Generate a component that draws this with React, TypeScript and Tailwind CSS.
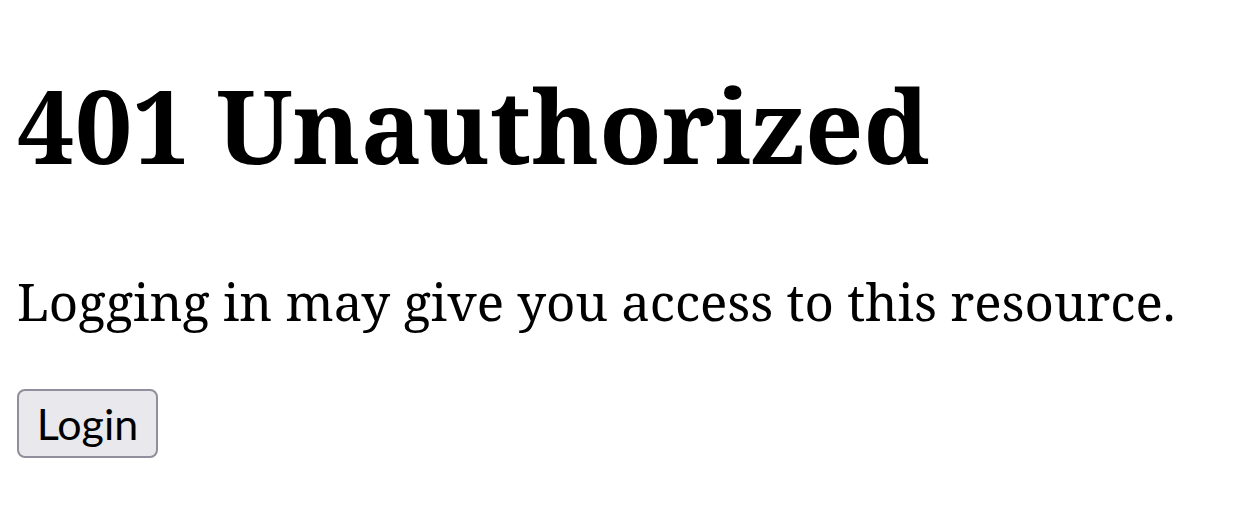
import React from 'react';

const App = () => {
  return (
    <div className="min-h-screen bg-white px-[17px] text-black">
      <h1 className="pt-[60px] text-[102px] leading-[130px] font-bold font-['Noto_Serif','DejaVu_Serif',serif]">
        401 Unauthorized
      </h1>
      <p className="mt-[76px] text-[51px] leading-[70px] font-['Noto_Serif','DejaVu_Serif',serif]">
        Logging in may give you access to this resource.
      </p>
      <button className="mt-[53px] h-[69px] w-[141px] rounded-[8px] border-2 border-[#8f8f9d] bg-[#e9e9ed] text-[43px] leading-none font-['Lato','Noto_Sans',sans-serif]">
        Login
      </button>
    </div>
  );
};

export default App;
